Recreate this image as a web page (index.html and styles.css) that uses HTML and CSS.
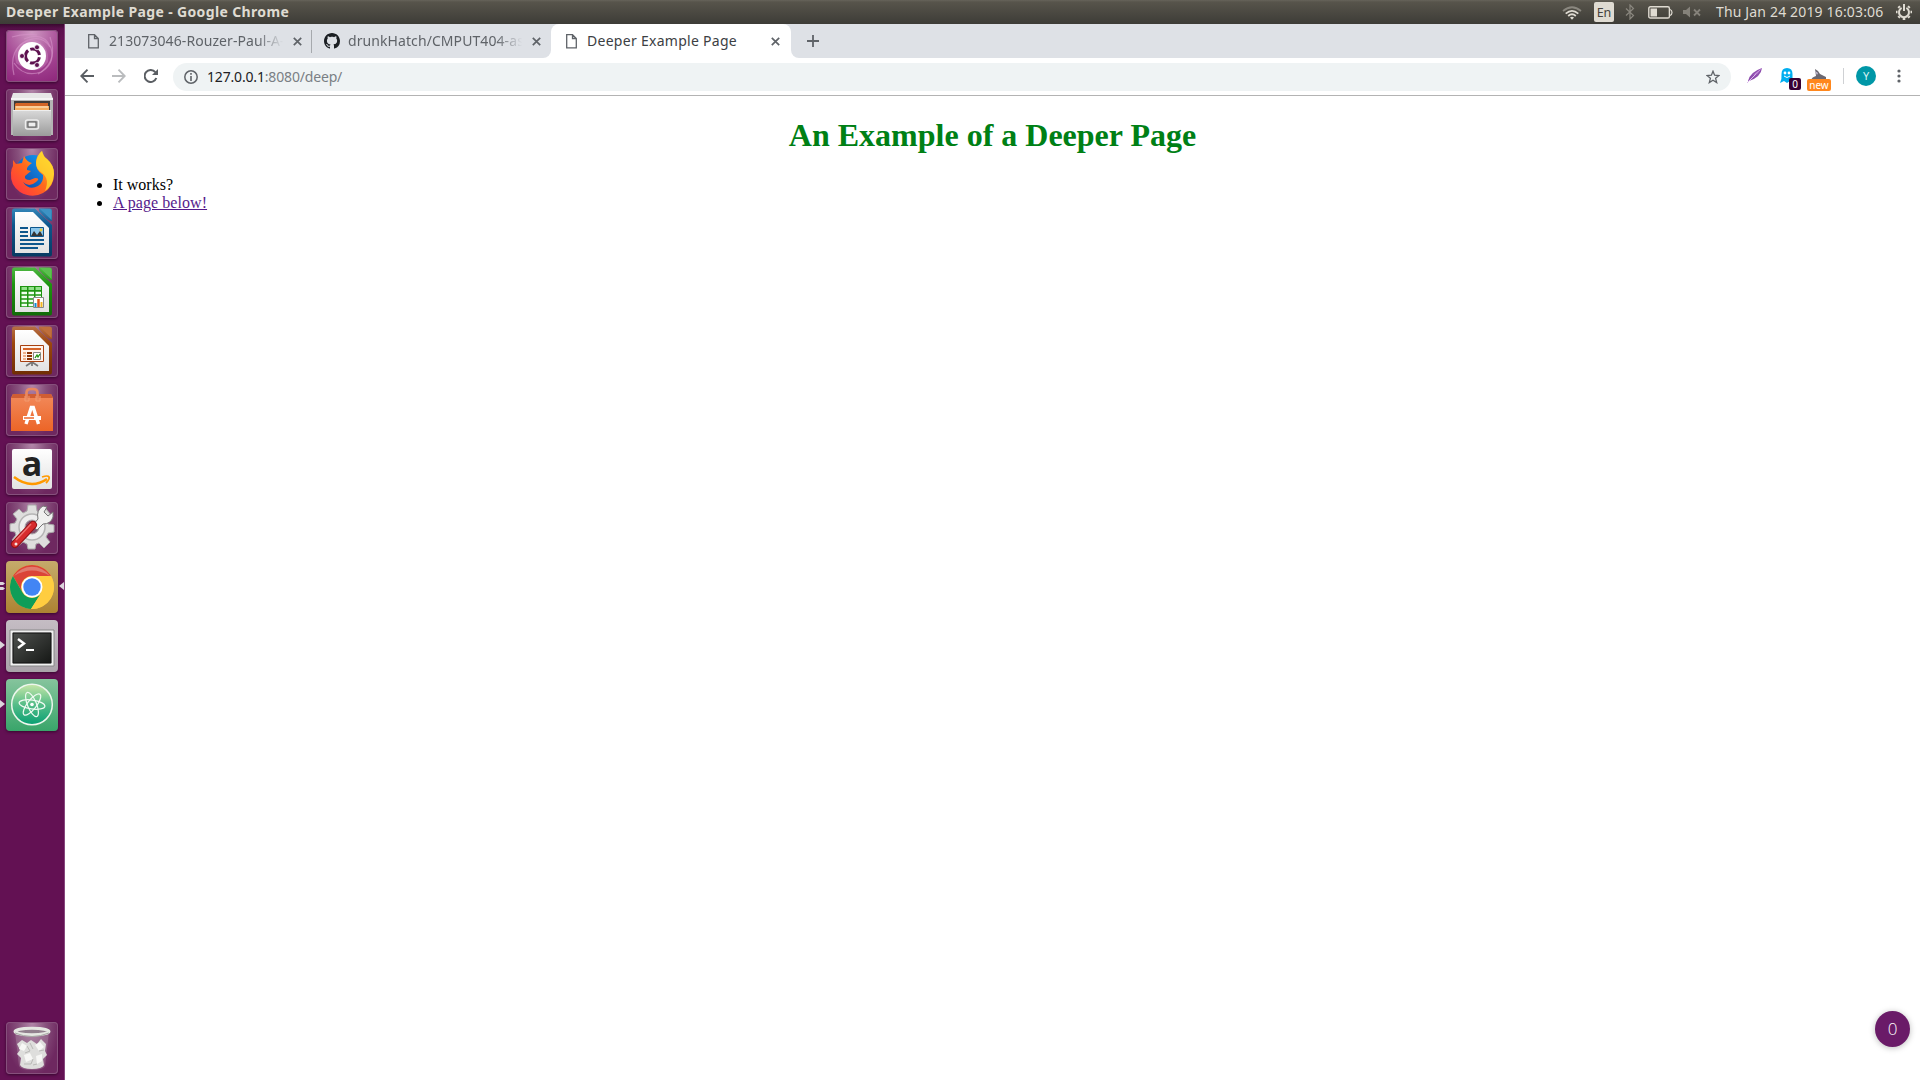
FILE: index.html
```html
<!DOCTYPE html>
<html lang="en">
<head>
<meta charset="utf-8">
<title>Deeper Example Page</title>
<link rel="stylesheet" href="styles.css">
</head>
<body>
<header class="panel">
  <span class="panel-title">Deeper Example Page - Google Chrome</span>
  <div class="indicators">
    <svg class="wifi" width="20" height="14" viewBox="0 0 20 14" fill="none" stroke-width="1.7"><path d="M1 5Q10-2.5 19 5" stroke="#8a877f"/><path d="M3.7 7.6Q10 2 16.3 7.6M6.2 10Q10 6.5 13.8 10" stroke="#dfdbd2"/><path d="M8 11.5Q10 10 12 11.5L10 13.7Z" fill="#dfdbd2"/></svg>
    <span class="keyboard">En</span>
    <svg class="bluetooth" width="10" height="16" viewBox="0 0 10 16" fill="none" stroke="#8a877f" stroke-width="1.2"><path d="M1 4.5L8.5 11.5L5 15V1L8.5 4.5L1 11.5"/></svg>
    <svg class="battery" width="25" height="13" viewBox="0 0 25 13"><rect x=".8" y=".8" width="20.6" height="11.2" rx="1.6" fill="none" stroke="#dfdbd2" stroke-width="1.4"/><path d="M2.5 2.5H9V10.500H2.500Z" fill="#dfdbd2"/><path d="M22 3.500Q24 4 24 6.500T22 9.500" fill="none" stroke="#dfdbd2" stroke-width="1.200"/></svg>
    <svg class="volume" width="18" height="12" viewBox="0 0 18 12"><path d="M0 4H3L7 .5V11.500L3 8H0Z" fill="#85827a"/><path d="M11 3.500L17 9.500M17 3.500L11 9.500" stroke="#85827a" stroke-width="1.800"/></svg>
    <span class="clock">Thu Jan 24 2019 16:03:06</span>
    <svg class="session" width="16" height="16" viewBox="0 0 16 16" fill="none" stroke="#dfdbd2"><path d="M5.600 3.800A5 5 0 1 0 10.400 3.800" stroke-width="2"/><path d="M8 0V7" stroke-width="2"/><path d="M1.500 8H0M14.500 8H16M3.700 12.300L2.400 13.600M12.300 12.300L13.600 13.600M8 14V16M3.700 3.700L2.400 2.400M12.300 3.700L13.600 2.400" stroke-width="2.600"/></svg>
  </div>
</header>
<div class="desktop">
  <nav class="launcher">
    <svg width="0" height="0" class="defs"><defs>
      <linearGradient id="sheet" x1="0" y1="0" x2="0" y2="1"><stop offset="0" stop-color="#fff"/><stop offset="1" stop-color="#e2e2e2"/></linearGradient>
      <linearGradient id="metal" x1="0" y1="0" x2="0" y2="1"><stop offset="0" stop-color="#d9d9d9"/><stop offset="1" stop-color="#9b9b9b"/></linearGradient>
      <linearGradient id="writer" x1="0" y1="0" x2="0" y2="1"><stop offset="0" stop-color="#3486b8"/><stop offset=".35" stop-color="#0d568c"/><stop offset="1" stop-color="#073a62"/></linearGradient>
      <linearGradient id="calc" x1="0" y1="0" x2="0" y2="1"><stop offset="0" stop-color="#4fb843"/><stop offset=".35" stop-color="#1e9410"/><stop offset="1" stop-color="#116b09"/></linearGradient>
      <linearGradient id="impress" x1="0" y1="0" x2="0" y2="1"><stop offset="0" stop-color="#b87046"/><stop offset=".35" stop-color="#9c460e"/><stop offset="1" stop-color="#702e05"/></linearGradient>
      <linearGradient id="bag" x1="0" y1="0" x2="0" y2="1"><stop offset="0" stop-color="#f28a5c"/><stop offset="1" stop-color="#ec6527"/></linearGradient>
      <linearGradient id="flame" x1="0" y1="1" x2="1" y2="0"><stop offset="0" stop-color="#ff2a48"/><stop offset=".5" stop-color="#ff6a1c"/><stop offset="1" stop-color="#ffe52e"/></linearGradient>
      <linearGradient id="globe" x1="0" y1="1" x2="1" y2="0"><stop offset="0" stop-color="#123b99"/><stop offset="1" stop-color="#10a5ff"/></linearGradient>
      <linearGradient id="term" x1="0" y1="0" x2="1" y2="1"><stop offset="0" stop-color="#4e514e"/><stop offset="1" stop-color="#161816"/></linearGradient>
      <linearGradient id="atom" x1="0" y1="0" x2="0" y2="1"><stop offset="0" stop-color="#c5e6a8"/><stop offset=".5" stop-color="#56bd88"/><stop offset="1" stop-color="#079f73"/></linearGradient>
    </defs></svg>
    <div class="tile dash"><svg viewBox="0 0 52 52"><g fill="none" stroke="#d795c9" stroke-opacity=".6" stroke-width="1.200"><path d="M8 45Q2 19 22 10Q37 5 44 17"/><path d="M18 9Q38 1 45 18Q50 35 32 44"/><path d="M44 7Q52 30 35 42Q18 48 8 33"/><path d="M6 7Q18 3 31 5"/></g><path d="M10 33Q5 13 26 9Q44 14 42 32Q31 48 10 33" fill="#d697ca" fill-opacity=".35"/><circle cx="26" cy="26" r="14" fill="#fff"/><circle cx="26.500" cy="26" r="7" fill="none" stroke="#5e1250" stroke-width="3" stroke-dasharray="12.200 2.460" stroke-dashoffset="-1.200"/><g fill="#5e1250" stroke="#fff" stroke-width=".8"><circle cx="16" cy="26" r="2.500"/><circle cx="31" cy="17.300" r="2.500"/><circle cx="31" cy="35" r="2.500"/></g></svg></div>
    <div class="tile"><svg viewBox="0 0 52 52"><path d="M7 4H45L47 10V20H5V10Z" fill="#e6e6e6"/><path d="M5 9H47V46H5Z" fill="#b4b4b4"/><path d="M5 9H47V11H5Z" fill="#f4f4f4"/><path d="M8 12H44V21H8Z" fill="#3f3b38"/><path d="M10 14H42V21H9V15Z" fill="#d36526"/><path d="M9 17H43V21H9Z" fill="#f5ad5f"/><path d="M10 18H42" stroke="#fff0d5"/><path d="M7 21H45V47H7Z" fill="url(#metal)"/><path d="M7 21.500H45" stroke="#eee"/><rect x="19.500" y="31" width="13" height="9" rx="2" fill="#aaa" stroke="#ededed" stroke-width="1.400"/><rect x="22" y="33" width="8" height="5" fill="#eee" stroke="#555"/></svg></div>
    <div class="tile"><svg viewBox="0 0 52 52"><circle cx="27" cy="25" r="18" fill="url(#globe)"/><path d="M7 12L10 16L16 15L18 8Q21 14 26 15Q20 19 21 22L25 23L19 28Q18 32 24 32L29 30Q35 30 30 34Q23 40 17 34Q23 43 32 38Q38 34 37 27Q29 22 30 13Q31 7 36 3Q37 8 41 11Q48 17 48 26Q48 39 37 45Q26 51 14 44Q4 37 5 25Q5 21 7 18Z" fill="url(#flame)"/><path d="M30 15Q31 7 36 3Q37 8 41 11Q48 17 48 26Q47 38 39 43Q44 31 36 25Q30 21 30 15Z" fill="#ffdc2f" fill-opacity=".75"/></svg></div>
    <div class="tile"><svg viewBox="0 0 52 52"><path d="M8 1.500H29L46 18V47Q46 49.500 44 49.500H8Q6 49.500 6 47V4Q6 1.500 8 1.500ZM33 1.500H44Q46 1.500 46 4V14Q42 15 33 4Z" fill="url(#writer)"/><path d="M34 2H44Q45.500 2 45.500 4V13Z" fill="#3d93c4"/><path d="M9 5H27L43 21V46H9Z" fill="url(#sheet)"/><path d="M14 21H22M14 25H22M14 29H22M14 33H38M14 37H38M14 41H32" stroke="#0d568c" stroke-width="2"/><path d="M24.500 20.500H37.500V29.500H24.500Z" fill="#8bc6eb" stroke="#0d568c"/><path d="M25 29L28 24L31 28L34 24L37 29Z" fill="#343434"/><circle cx="35" cy="23" r="1.400" fill="#eacb37"/></svg></div>
    <div class="tile"><svg viewBox="0 0 52 52"><path d="M8 1.500H29L46 18V47Q46 49.500 44 49.500H8Q6 49.500 6 47V4Q6 1.500 8 1.500ZM33 1.500H44Q46 1.500 46 4V14Q42 15 33 4Z" fill="url(#calc)"/><path d="M34 2H44Q45.500 2 45.500 4V13Z" fill="#5cc04f"/><path d="M9 5H27L43 21V46H9Z" fill="url(#sheet)"/><path d="M14 20H36V41H14Z" fill="#1e9410"/><path d="M15.500 22.500H21M22.500 22.500H28M29.500 22.500H35" stroke="#92e18a" stroke-width="3"/><path d="M15.500 27H21M22.500 27H28M29.500 27H35M15.500 31H21M22.500 31H28M29.500 31H35M15.500 35H21M22.500 35H28M15.500 39H21M22.500 39H28" stroke="#f2fff1" stroke-width="2.700"/><path d="M27.500 31.500H37.500V41.500H27.500Z" fill="#fff" stroke="#888"/><path d="M29.500 41V37" stroke="#138ad0" stroke-width="2"/><path d="M32.500 41V33" stroke="#e35412" stroke-width="2.500"/><path d="M35.500 41V36" stroke="#f3b722" stroke-width="2"/></svg></div>
    <div class="tile"><svg viewBox="0 0 52 52"><path d="M8 1.500H29L46 18V47Q46 49.500 44 49.500H8Q6 49.500 6 47V4Q6 1.500 8 1.500ZM33 1.500H44Q46 1.500 46 4V14Q42 15 33 4Z" fill="url(#impress)"/><path d="M34 2H44Q45.500 2 45.500 4V13Z" fill="#bf6f3c"/><path d="M9 5H27L43 21V46H9Z" fill="url(#sheet)"/><path d="M20 41L26 37L32 41M26 37V41" fill="none" stroke="#777" stroke-width="1.700"/><path d="M14.500 20.500H37.500V36.500H14.500Z" fill="#fff3eb" stroke="#a74010"/><path d="M17 24H35" stroke="#d56328" stroke-width="2"/><path d="M17 28H20M17 31H20M17 34H20" stroke="#eeb18b" stroke-width="2"/><path d="M21 28H26M21 31H26M21 34H26" stroke="#8b3506" stroke-width="2"/><path d="M27.500 27.500H34.500V34.500H27.500Z" fill="#fff" stroke="#888"/><path d="M29 33L31 30L32 32L34 29" fill="none" stroke="#1e9410" stroke-width="1.300"/></svg></div>
    <div class="tile"><svg viewBox="0 0 52 52"><path d="M7 10H45L47 14V47H5V14Z" fill="url(#bag)"/><path d="M7 10H45L47 14H5Z" fill="#d05d33"/><path d="M20.500 16V9Q20.500 5 25 5H27Q31.500 5 31.500 9V16" fill="none" stroke="#e9885f" stroke-width="2.700"/><path d="M19 12V17H23V12M30 12V17H34V12" fill="none" stroke="#f29a71"/><path d="M20 40L25.300 23.500H27.300L32.500 40" fill="none" stroke="#fff" stroke-width="3.400"/><path d="M17 34H35" stroke="#fff" stroke-width="4"/><path d="M18 34H28" stroke="#ed692f" stroke-width="1.500"/></svg></div>
    <div class="tile"><svg viewBox="0 0 52 52"><rect x="6" y="6" width="40" height="40" rx="2" fill="url(#sheet)"/><text x="26" y="33" text-anchor="middle" class="amazon-letter">a</text><path d="M8 34Q25 47 41 36" fill="none" stroke="#ff9900" stroke-width="2.500"/><path d="M36 34Q42 32 43 34Q44 36 40 40" fill="none" stroke="#ff9900" stroke-width="1.800"/></svg></div>
    <div class="tile"><svg viewBox="0 0 52 52"><path d="M21 9L22 3H30L31 9L35 11L40 7L45 13L41 18L42 22L48 23V30L42 31L40 35L44 40L38 46L33 41L30 42L29 47H22L21 42L17 40L12 44L6 38L10 33L9 30L4 29V22L9 21L11 17L7 12L13 7L17 11Z" fill="#dededd" stroke="#aaa"/><circle cx="26" cy="25" r="13" fill="#eee" stroke="#b5b5b5" stroke-width="1.500"/><circle cx="26" cy="25" r="7" fill="#80526f" stroke="#aaa"/><path d="M26 24L32 17Q30 8 37 4L41 5L38 10L42 14L47 10V15Q45 22 37 22L31 28Z" fill="#f0f0ef" stroke="#777"/><path d="M9 42L27 23" stroke="#941116" stroke-width="8" stroke-linecap="round"/><path d="M9 42L27 23" stroke="#d72b2d" stroke-width="6" stroke-linecap="round"/><path d="M10 38L25 22" stroke="#ef7270" stroke-width="1.500"/><circle cx="10" cy="42" r="1.500" fill="#f6e7e3"/></svg></div>
    <div class="tile gold">
      <svg viewBox="0 0 52 52"><circle cx="26" cy="26" r="22" fill="#ffcd40"/><path d="M6.950 15A22 22 0 0 1 45.050 15H26A11 11 0 0 0 16.500 31.500Z" fill="#db4437"/><path d="M6.950 15A22 22 0 0 0 25 48L35.500 31.500A11 11 0 0 1 16.500 31.500Z" fill="#0f9d58"/><path d="M26 15H45.050A22 22 0 0 1 25 48L35.500 31.500A11 11 0 0 0 26 15Z" fill="#ffcd40"/><path d="M8 15A22 22 0 0 1 44 15Q26 4 8 15" fill="#e07a6e"/><circle cx="26" cy="26" r="10.500" fill="#fff"/><circle cx="26" cy="26" r="8.700" fill="#4285f4"/></svg>
      <svg class="marks-left" viewBox="0 0 5 10"><path d="M0 0H3L5 1.500L3 3H0ZM0 5H3L5 6.500L3 8H0Z" fill="#dcd5dc"/></svg>
      <svg class="mark-right" viewBox="0 0 5 10"><path d="M5 0V8L0 4Z" fill="#dcd5dc"/></svg>
    </div>
    <div class="tile silver">
      <svg viewBox="0 0 52 52"><path d="M4 10H48V46H4Z" fill="#f1f1f1" stroke="#888"/><path d="M6 12H46V44H6Z" fill="#d3d3d3"/><path d="M7 13H45V43H7Z" fill="url(#term)" stroke="#111"/><path d="M12 19L18 23.500L12 28" fill="none" stroke="#fff" stroke-width="2.400"/><path d="M20 30H28" stroke="#fff" stroke-width="2"/></svg>
      <svg class="mark-left" viewBox="0 0 5 10"><path d="M0 0L5 4L0 8Z" fill="#dcd5dc"/></svg>
    </div>
    <div class="tile mint">
      <svg viewBox="0 0 52 52"><circle cx="26" cy="25.500" r="20.300" fill="url(#atom)" stroke="#edf7ed" stroke-width="1.500"/><g fill="none" stroke="#effaf2" stroke-width="1.200"><ellipse cx="26" cy="25.500" rx="13" ry="4.500" transform="rotate(8 26 25.500)"/><ellipse cx="26" cy="25.500" rx="13" ry="4.500" transform="rotate(68 26 25.500)"/><ellipse cx="26" cy="25.500" rx="13" ry="4.500" transform="rotate(128 26 25.500)"/></g><circle cx="26" cy="25.500" r="1.800" fill="#fff"/></svg>
      <svg class="mark-left" viewBox="0 0 5 10"><path d="M0 0L5 4L0 8Z" fill="#dcd5dc"/></svg>
    </div>
    <div class="tile trash"><svg viewBox="0 0 52 52"><path d="M9 10H43L39 44Q37 48 26 48T13 44Z" fill="#bfa9b8" fill-opacity=".3"/><path d="M11 22L16 18L21 21L25 18L31 22L35 17L40 22L39 29L41 33L37 37L38 43Q36 47 26 47T14 43L15 36L11 32L14 28Z" fill="#dededc"/><path d="M16 21L21 24L18 29L13 27ZM29 23L34 20L38 25L33 29ZM18 33L24 31L27 37L20 40ZM30 34L36 32L36 39L31 42Z" fill="#f7f7f5"/><path d="M21 24L24 29L19 31M33 29L38 28M27 37L25 42L18 42M31 42L27 43M24 21L27 27" fill="none" stroke="#b9b9b6"/><ellipse cx="26" cy="9.500" rx="17" ry="3.300" fill="#92808e" stroke="#e5e7e2" stroke-width="3"/><path d="M9 11Q26 18 43 11" fill="none" stroke="#a5a7a3"/></svg></div>
  </nav>
  <main class="browser">
    <div class="tabs">
      <div class="tab"><svg class="page-icon" viewBox="0 0 11 15"><path d="M.7.7H6.500L10.300 4.500V13.800H.7ZM6.500.7V4.500H10.300" fill="none" stroke="#5f6368" stroke-width="1.300"/></svg><span class="tab-title fade first-title">213073046-Rouzer-Paul-A-</span><svg class="close" viewBox="0 0 9 9"><path d="M.8.8L8.200 8.200M8.200.8L.8 8.200" stroke="#5f6368" stroke-width="1.700"/></svg></div>
      <div class="tab second"><svg class="github" viewBox="0 0 16 16"><path fill="#1b1f23" d="M8 0C3.580 0 0 3.580 0 8c0 3.540 2.290 6.530 5.470 7.590.4.070.55-.17.55-.38 0-.19-.01-.82-.01-1.490-2.010.37-2.530-.49-2.690-.94-.09-.23-.48-.94-.82-1.130-.28-.15-.68-.52-.01-.53.63-.01 1.080.58 1.230.82.72 1.210 1.870.87 2.330.66.070-.52.280-.87.510-1.070-1.780-.2-3.640-.89-3.640-3.950 0-.87.310-1.590.82-2.150-.08-.2-.36-1.020.08-2.120 0 0 .67-.21 2.200.82.640-.18 1.320-.27 2-.27s1.360.09 2 .27c1.530-1.040 2.200-.82 2.200-.82.440 1.100.16 1.920.08 2.120.51.560.82 1.270.82 2.150 0 3.070-1.870 3.750-3.650 3.950.29.250.54.730.54 1.480 0 1.070-.01 1.930-.01 2.200 0 .21.150.46.550.38A8.010 8.010 0 0 0 16 8c0-4.420-3.580-8-8-8Z"/></svg><span class="tab-title fade second-title">drunkHatch/CMPUT404-as</span><svg class="close" viewBox="0 0 9 9"><path d="M.8.8L8.200 8.200M8.200.8L.8 8.200" stroke="#5f6368" stroke-width="1.700"/></svg></div>
      <div class="tab active"><svg class="page-icon" viewBox="0 0 11 15"><path d="M.7.7H6.500L10.300 4.500V13.800H.7ZM6.500.7V4.500H10.300" fill="none" stroke="#5f6368" stroke-width="1.300"/></svg><span class="tab-title">Deeper Example Page</span><svg class="close" viewBox="0 0 9 9"><path d="M.8.8L8.200 8.200M8.200.8L.8 8.200" stroke="#5f6368" stroke-width="1.700"/></svg></div>
      <div class="new-tab"><svg width="12" height="12" viewBox="0 0 12 12"><path d="M6 0V12M0 6H12" stroke="#5f6368" stroke-width="1.800"/></svg></div>
    </div>
    <div class="toolbar">
      <svg class="back" width="14" height="14" viewBox="0 0 14 14" fill="none" stroke="#5a5e63" stroke-width="1.900"><path d="M14 7H1.500M7.500 .7L1.300 7L7.500 13.300"/></svg>
      <svg class="forward" width="14" height="14" viewBox="0 0 14 14" fill="none" stroke="#babcbe" stroke-width="1.900"><path d="M0 7H12.500M6.500 .7L12.700 7L6.500 13.300"/></svg>
      <svg class="reload" width="15" height="14" viewBox="0 0 15 14"><path d="M12.300 9A6 6 0 1 1 11.300 3.200" fill="none" stroke="#5a5e63" stroke-width="2"/><path d="M14 0V6H8Z" fill="#5a5e63"/></svg>
      <div class="address"><svg width="14" height="14" viewBox="0 0 14 14"><circle cx="7" cy="7" r="6.200" fill="none" stroke="#5f6368" stroke-width="1.500"/><path d="M7 6V11M7 3V4.700" stroke="#5f6368" stroke-width="1.600"/></svg><span class="url"><span class="host">127.0.0.1</span>:8080/deep/</span><svg class="star" width="14" height="14" viewBox="0 0 14 14"><path d="M7 1.200L8.600 5.200L13 5.500L9.600 8.300L10.700 12.600L7 10.200L3.300 12.600L4.400 8.300L1 5.500L5.400 5.200Z" fill="none" stroke="#5f6368" stroke-width="1.300"/></svg></div>
      <svg class="feather" width="16" height="17" viewBox="0 0 16 17"><path d="M1 14Q3 5 15 1Q14 10 2 14Z" fill="#8e4eae"/><path d="M0 16L13 3" stroke="#dfbfed"/><path d="M6 8L15 1L10 7" fill="#c28bd8"/></svg>
      <div class="extension ghost"><svg width="14" height="15" viewBox="0 0 14 15"><path d="M1.500 6Q1.500 0 7 0T12.500 6V15L10 13L7 15L4 13L0 15Q2 11 1.500 6Z" fill="#00aef0"/><circle cx="5" cy="5" r="1.400" fill="#fff"/><circle cx="9" cy="5" r="1.400" fill="#fff"/><path d="M4 8Q7 11 10 8" fill="none" stroke="#fff"/></svg><span class="badge count">0</span></div>
      <div class="extension news"><svg width="16" height="14" viewBox="0 0 16 14"><path d="M4 0L7 2L9 5L15 8V11H0Q1 8 5 7Z" fill="#6b6870"/><path d="M4 2L7 4L6 6Z" fill="#c8bfd6"/></svg><span class="badge new">new</span></div>
      <span class="divider"></span>
      <span class="avatar">Y</span>
      <svg class="menu" width="4" height="14" viewBox="0 0 4 14" fill="#5f6368"><circle cx="2" cy="2" r="1.600"/><circle cx="2" cy="7" r="1.600"/><circle cx="2" cy="12" r="1.600"/></svg>
    </div>
    <article class="page">
      <h1>An Example of a Deeper Page</h1>
      <ul><li>It works?</li><li><a href="#">A page below!</a></li></ul>
      <span class="counter">0</span>
    </article>
  </main>
</div>
</body>
</html>
```
FILE: styles.css
```css
* { box-sizing: border-box; }
body { margin: 0; height: 1080px; overflow: hidden; display: flex; flex-direction: column; background: #fff; font-family: "Noto Sans", sans-serif; }
svg { display: block; flex: none; }
.panel { height: 24px; flex: none; display: flex; align-items: center; justify-content: space-between; padding: 0 8px 0 6px; color: #dfdbd2; background: linear-gradient(#66635a 0, #57544b 2px, #3d3c37 100%); white-space: nowrap; }
.panel-title { font-size: 14px; font-weight: 700; line-height: 24px; letter-spacing: .36px; }
.indicators { display: flex; align-items: center; }
.wifi { margin-right: 12px; margin-top: 2px; }
.keyboard { width: 20px; height: 20px; margin-right: 11px; border-radius: 2px; background: #dfdbd2; color: #45433d; font-size: 12.500px; line-height: 21px; text-align: center; }
.bluetooth { margin-right: 13px; }
.battery { margin-right: 10px; }
.volume { margin-right: 15px; }
.clock { width: 168px; margin-right: 12px; font-size: 14px; line-height: 24px; letter-spacing: .16px; }
.desktop { height: 1056px; display: flex; }
.launcher { width: 65px; flex: none; display: flex; flex-direction: column; gap: 7px; padding: 6px 7px 6px 6px; border-right: 1px solid #87467d; background: linear-gradient(#3a0930 0, #5b104d 5px, #631153 14px, #631153 100%); }
.defs { position: absolute; }
.tile { position: relative; width: 52px; height: 52px; flex: none; border-radius: 4px; background: radial-gradient(ellipse at 50% 0, #b387aa 0, #87507c 38%, #6e2860 75%); box-shadow: inset 0 0 0 1px #86507c, 0 1px 3px #35072e; }
.tile > svg:first-child { width: 52px; height: 52px; overflow: visible; }
.dash { background: radial-gradient(circle at 50% 5%, #ce98c2, #a44693 55%, #8d257a); }
.gold { background: linear-gradient(#c5ab6b, #ac8332); box-shadow: 0 1px 3px #35072e; }
.silver { background: linear-gradient(#c5bdc4, #aaa3aa); box-shadow: 0 1px 3px #35072e; }
.mint { background: linear-gradient(#86c49d, #39a56a); box-shadow: 0 1px 3px #35072e; }
.trash { margin-top: auto; }
.mark-left, .mark-right, .marks-left { position: absolute; width: 5px; height: 10px; top: 21px; }
.mark-left, .marks-left { left: -6px; }
.mark-right { left: 53px; }
.amazon-letter { font: 700 34px "Open Sans", sans-serif; fill: #222; }
.browser { flex: 1; min-width: 0; display: flex; flex-direction: column; }
.tabs { height: 34px; flex: none; display: flex; background: #fff; }
.tab { width: 247px; display: flex; align-items: center; padding: 0 9px 0 23px; color: #5f6368; background: #dee1e6; }
.tab:first-child { border-right: 1px solid; border-image: linear-gradient(transparent 20%, #a6a9ad 20%, #a6a9ad 82%, transparent 82%) 1; }
.page-icon { width: 11px; height: 15px; margin-right: 10px; }
.tab-title { width: 176px; margin-right: 8px; font-size: 14px; line-height: 34px; letter-spacing: .08px; white-space: nowrap; overflow: hidden; }
.active .tab-title { letter-spacing: .28px; }
.fade { -webkit-mask-image: linear-gradient(90deg, #000 84%, transparent 99%); mask-image: linear-gradient(90deg, #000 84%, transparent 99%); }
.close { width: 9px; height: 9px; }
.second { width: 239px; padding-left: 12px; border-bottom-right-radius: 8px; }
.github { width: 16px; height: 16px; margin-right: 8px; }
.active { width: 240px; padding: 0 0 0 15px; color: #3c4043; background: linear-gradient(#dee1e6 50%, #fff 50%); position: relative; z-index: 0; }
.active::before { content: ""; position: absolute; inset: 0; z-index: -1; border-radius: 8px 8px 0 0; background: #fff; }
.new-tab { flex: 1; display: flex; align-items: center; padding-left: 16px; border-bottom-left-radius: 8px; background: #dee1e6; }
.toolbar { height: 38px; flex: none; display: flex; align-items: center; padding: 0 19px 2px 15px; border-bottom: 1px solid #b3b3b3; background: #fff; }
.forward { margin-left: 18px; }
.reload { margin-left: 18px; }
.address { width: 1558px; height: 28px; margin-left: 14px; margin-top: 2px; display: flex; align-items: center; border-radius: 14px; padding: 0 11px; background: #eff3f4; }
.url { flex: 1; margin-left: 9px; color: #7a7f84; font-size: 14px; line-height: 28px; letter-spacing: -.17px; white-space: nowrap; }
.host { color: #202124; }
.feather { margin-left: 16px; }
.extension { position: relative; }
.ghost { margin-left: 17px; }
.news { margin-left: 17px; }
.badge { position: absolute; height: 12px; border-radius: 2px; color: #fff; font-size: 10px; line-height: 12px; text-align: center; }
.count { left: 9px; top: 10px; width: 12px; background: #370033; }
.new { left: -4px; top: 10px; width: 24px; background: #ff871d; }
.divider { width: 1px; height: 16px; margin-left: 16px; background: #cfd1d4; }
.avatar { width: 20px; height: 20px; margin-left: 12px; border-radius: 50%; background: #0097a7; color: #d9f2f3; font-size: 11px; line-height: 20px; text-align: center; }
.menu { margin-left: auto; }
.page { position: relative; flex: 1; padding: 0 8px; font: 16px "Liberation Serif", serif; color: #000; }
.page h1 { margin: 21.440px 0; color: #008015; font-size: 32px; line-height: 37px; text-align: center; }
.page ul { margin: 0; padding-left: 40px; }
.page li { line-height: 18px; }
.page a { color: #551a8b; letter-spacing: .06px; }
.counter { position: absolute; right: 10px; bottom: 33px; width: 35px; height: 36px; border-radius: 50%; background: #6a1b68; box-shadow: 0 1px 6px #0004; color: #fff; font: 300 17px/36px "Open Sans", sans-serif; text-align: center; }
```
